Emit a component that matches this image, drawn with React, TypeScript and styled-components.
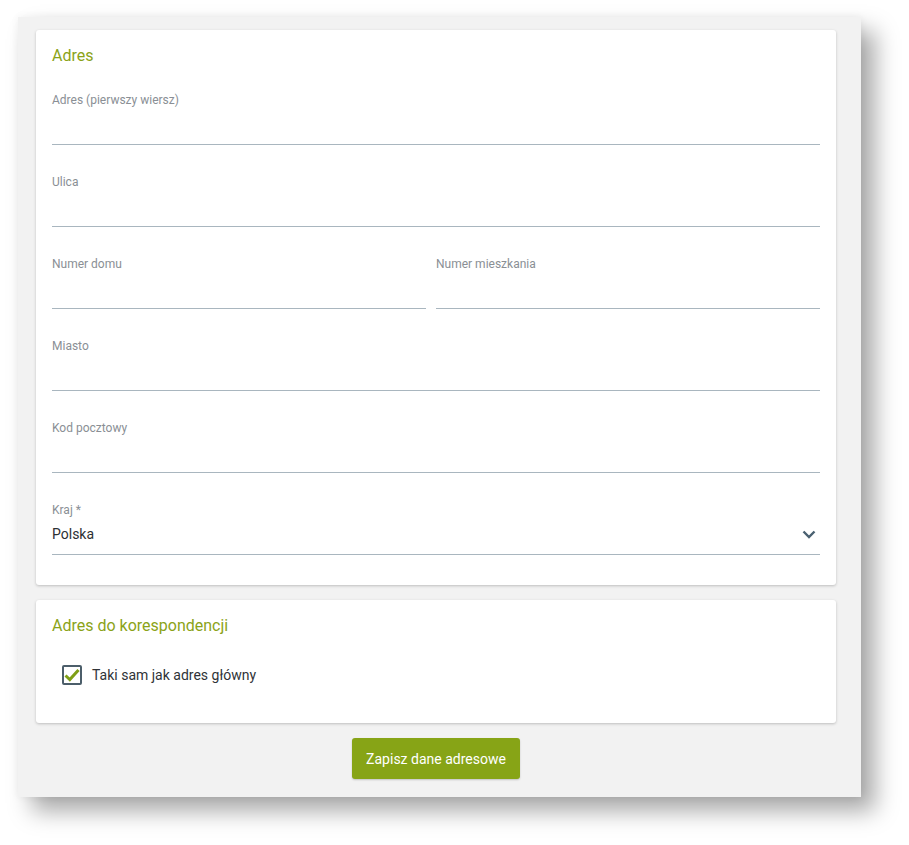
import React from "react";
import styled, { createGlobalStyle } from "styled-components";

const Global = createGlobalStyle`
  html, body { margin: 0; padding: 0; background: #ffffff; }
  body { font-family: Roboto, "Noto Sans", Arial, sans-serif; }
  * { box-sizing: border-box; }
`;

const Page = styled.div`
  padding: 17px 0 0 18px;
  width: 909px;
  height: 845px;
`;

const Panel = styled.div`
  width: 843px;
  background: #f2f2f2;
  padding: 13px 25px 18px 18px;
  display: flex;
  flex-direction: column;
  gap: 15px;
  box-shadow: 0 0 8px rgba(0, 0, 0, 0.06), 14px 14px 22px rgba(0, 0, 0, 0.34);
`;

const Card = styled.section<{ $pb: number }>`
  background: #fff;
  border-radius: 3px;
  box-shadow: 0 1px 3px rgba(0, 0, 0, 0.22);
  padding: 16px 16px ${(p) => p.$pb}px 16px;
`;

const Title = styled.h2`
  margin: 0;
  font-size: 16px;
  line-height: 20px;
  font-weight: 400;
  color: #8ba318;
`;

const Fields = styled.div`
  margin-top: 27px;
  display: flex;
  flex-direction: column;
  gap: 30px;
`;

const Row = styled.div`
  display: grid;
  grid-template-columns: 374px 1fr;
  gap: 10px;
`;

const FieldBox = styled.div`
  display: flex;
  flex-direction: column;
`;

const Label = styled.label`
  font-size: 12px;
  line-height: 14px;
  color: #8a8f95;
`;

const InputLine = styled.div`
  height: 38px;
  border-bottom: 1px solid #a9b6bf;
  display: flex;
  align-items: flex-end;
  justify-content: space-between;
  padding-bottom: 12px;
`;

const Value = styled.span`
  font-size: 14px;
  line-height: 16px;
  color: #2c3034;
`;

const Chevron = styled.svg`
  width: 14px;
  height: 9px;
  margin-right: 4px;
  margin-bottom: 3px;
`;

const CheckRow = styled.label`
  display: flex;
  align-items: center;
  gap: 10px;
  margin: 29px 0 0 10px;
  font-size: 14px;
  color: #2f3337;
`;

const Box = styled.span`
  width: 20px;
  height: 20px;
  border: 2px solid #4c5e6a;
  border-radius: 2px;
  display: flex;
  align-items: center;
  justify-content: center;
`;

const Footer = styled.div`
  display: flex;
  justify-content: center;
`;

const Button = styled.button`
  height: 41px;
  padding: 0 14px;
  border: none;
  border-radius: 3px;
  background: #87a416;
  color: #fff;
  font-family: Roboto, Arial, sans-serif;
  font-size: 14px;
  box-shadow: 0 1px 2px rgba(0, 0, 0, 0.2);
`;

const Field = ({ label, value, select }: { label: string; value?: string; select?: boolean }) => (
  <FieldBox>
    <Label>{label}</Label>
    <InputLine>
      <Value>{value}</Value>
      {select && (
        <Chevron viewBox="0 0 14 9">
          <path d="M1.5 1.5 L7 7 L12.5 1.5" fill="none" stroke="#4a6171" strokeWidth="2.4" />
        </Chevron>
      )}
    </InputLine>
  </FieldBox>
);

export default function App() {
  return (
    <>
      <Global />
      <Page>
        <Panel>
          <Card $pb={30}>
            <Title>Adres</Title>
            <Fields>
              <Field label="Adres (pierwszy wiersz)" />
              <Field label="Ulica" />
              <Row>
                <Field label="Numer domu" />
                <Field label="Numer mieszkania" />
              </Row>
              <Field label="Miasto" />
              <Field label="Kod pocztowy" />
              <Field label="Kraj *" value="Polska" select />
            </Fields>
          </Card>
          <Card $pb={38}>
            <Title>Adres do korespondencji</Title>
            <CheckRow>
              <Box>
                <svg width="16" height="14" viewBox="0 0 16 14">
                  <path d="M1.5 7.5 L5.8 11.5 L14.5 2" fill="none" stroke="#7f9f16" strokeWidth="3" />
                </svg>
              </Box>
              Taki sam jak adres główny
            </CheckRow>
          </Card>
          <Footer>
            <Button>Zapisz dane adresowe</Button>
          </Footer>
        </Panel>
      </Page>
    </>
  );
}
